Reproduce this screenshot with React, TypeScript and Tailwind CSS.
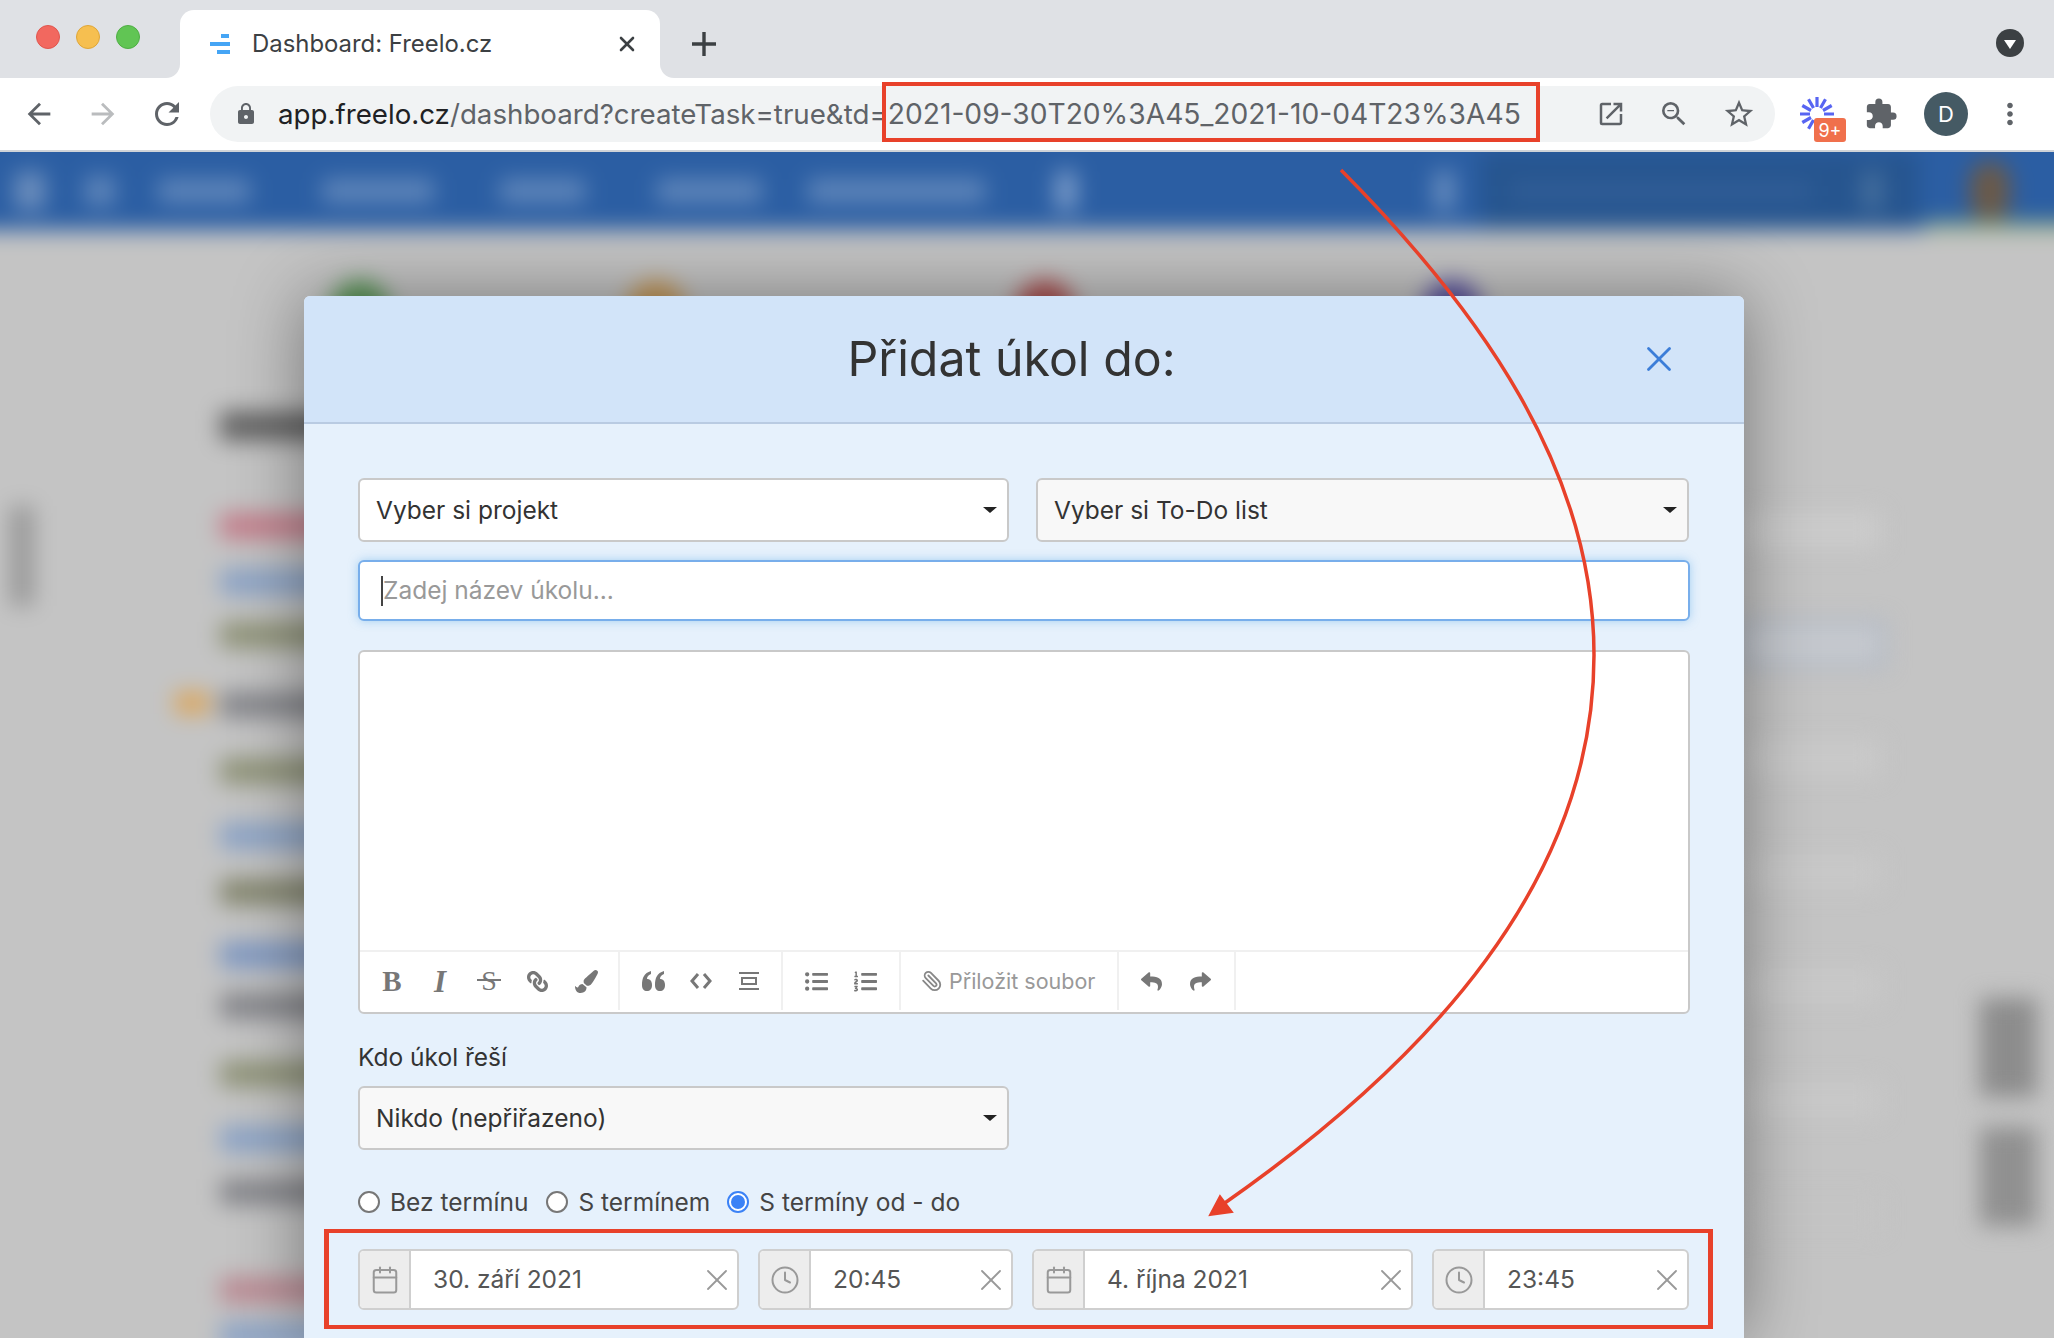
import { Calendar, Clock, Paperclip, X } from "lucide-react";
import {
  FaLink,
  FaListOl,
  FaListUl,
  FaPaintBrush,
  FaReply,
  FaShare,
} from "react-icons/fa";
import {
  MdArrowBack,
  MdArrowForward,
  MdExtension,
  MdLock,
  MdMoreVert,
  MdOutlineOpenInNew,
  MdOutlineStarBorder,
  MdRefresh,
  MdZoomOut,
} from "react-icons/md";

const font = "font-['Inter','Liberation_Sans',sans-serif]";

// blurred task rows behind the modal
const leftRows = [
  "mt-[72px] w-[400px] bg-[#c47f8c]",
  "mt-[30px] w-[400px] bg-[#8ba3c6]",
  "mt-[27px] w-[420px] bg-[#8f9378]",
  "mt-[44px] w-[400px] bg-[#85868b]",
  "mt-[40px] w-[420px] bg-[#8f9378]",
  "mt-[39px] w-[400px] bg-[#8ba3c6]",
  "mt-[30px] w-[420px] bg-[#84866e]",
  "mt-[37px] w-[400px] bg-[#7f98c2]",
  "mt-[25px] w-[400px] bg-[#85868b]",
  "mt-[42px] w-[420px] bg-[#8f9378]",
  "mt-[39px] w-[400px] bg-[#8ba3c6]",
  "mt-[27px] w-[400px] bg-[#85868b]",
  "mt-[72px] w-[400px] bg-[#bb8b94]",
  "mt-[19px] w-[400px] bg-[#8ba3c6]",
];

function BlurredPage() {
  return (
    <div className="mx-[-40px] mt-[-40px] flex h-[1300px] w-[2134px] flex-col blur-[11px]">
      <div className="flex h-[118px] shrink-0 items-center bg-[#2b5ea3] pl-[40px] pt-[40px]">
        <div className="ml-[15px] h-[38px] w-[30px] rounded bg-[#6d8fbd]" />
        <div className="ml-[40px] h-[30px] w-[30px] rounded bg-[#5f86ba]" />
        <div className="ml-[43px] h-[24px] w-[92px] rounded bg-[#5f86ba]" />
        <div className="ml-[72px] h-[24px] w-[112px] rounded bg-[#5f86ba]" />
        <div className="ml-[66px] h-[24px] w-[85px] rounded bg-[#5f86ba]" />
        <div className="ml-[72px] h-[24px] w-[105px] rounded bg-[#5f86ba]" />
        <div className="ml-[46px] h-[24px] w-[177px] rounded bg-[#5f86ba]" />
        <div className="ml-[71px] h-[40px] w-[20px] rounded bg-[#7f9fcb]" />
        <div className="ml-[358px] h-[40px] w-[20px] rounded bg-[#6a8fc0]" />
        <div className="ml-[27px] flex h-[78px] w-[437px] shrink-0 items-center bg-[#26558f] pl-[30px]">
          <div className="h-[16px] w-[300px] bg-[#335f98]" />
          <div className="ml-[51px] h-[40px] w-[20px] rounded bg-[#46709f]" />
        </div>
        <div className="ml-[52px] h-[60px] w-[40px] shrink-0 rounded-full bg-[#6b5a48]" />
      </div>
      <div className="ml-[1965px] mt-[-8px] h-[8px] w-[170px] shrink-0 bg-[#8fae7c]" />
      <div className="flex grow bg-[#c4c4c4]">
        <div className="ml-[50px] mt-[276px] h-[100px] w-[24px] bg-[#999]" />
        <div className="ml-[186px] flex w-[1400px] flex-col">
          <div className="ml-[110px] mt-[50px] flex items-start">
            <div className="size-[60px] rounded-full bg-[#5f9a5c]" />
            <div className="ml-[236px] size-[60px] rounded-full bg-[#c59a5c]" />
            <div className="ml-[329px] size-[60px] rounded-full bg-[#ad5252]" />
            <div className="ml-[347px] size-[60px] rounded-full bg-[#5f57a3]" />
          </div>
          <div className="mt-[71px] h-[30px] w-[400px] bg-[#666]" />
          <div className="flex flex-col">
            {leftRows.map((cls, i) => (
              <div key={i} className={`relative h-[26px] ${cls}`}>
                {i === 3 && <div className="absolute left-[-45px] top-0 h-[22px] w-[34px] bg-[#dba65c]" />}
              </div>
            ))}
          </div>
        </div>
      </div>
    </div>
  );
}

function BlurredRight() {
  const rows = [
    "mt-[0px] bg-[#cbcbcb]",
    "mt-[78px] bg-[#c6c9ce] outline-[6px] outline-[#aab4c4]",
    "mt-[78px] bg-[#c9c9c9]",
    "mt-[78px] bg-[#c8c8c8]",
    "mt-[78px] bg-[#c8c8c8]",
    "mt-[78px] bg-[#c8c8c8]",
    "mt-[78px] bg-[#c4c4c4]",
  ];
  return (
    <div className="flex items-start blur-[11px]">
      <div className="flex w-[136px] flex-col">
        {rows.map((cls, i) => (
          <div key={i} className={`h-[36px] w-[136px] ${cls}`} />
        ))}
      </div>
      <div className="ml-[100px] mt-[486px] flex flex-col gap-[30px]">
        <div className="h-[99px] w-[57px] bg-[#8c8c8c]" />
        <div className="h-[99px] w-[57px] bg-[#909090]" />
      </div>
    </div>
  );
}

function BrowserTop() {
  return (
    <>
      <div className={`flex h-[78px] shrink-0 items-end bg-[#dfe1e5] ${font}`}>
        <div className="mb-[29px] ml-[36px] flex gap-[16px]">
          <span className="size-[24px] rounded-full border border-[#e0564e] bg-[#f2685f]" />
          <span className="size-[24px] rounded-full border border-[#dfa638] bg-[#f6bf50]" />
          <span className="size-[24px] rounded-full border border-[#4fae44] bg-[#61c554]" />
        </div>
        <div className="relative ml-[40px] flex h-[68px] w-[480px] items-center rounded-t-[14px] bg-white pl-[30px] pr-[21px]">
          <span className="absolute bottom-0 left-[-14px] size-[14px] bg-white">
            <span className="block size-[14px] rounded-br-[14px] bg-[#dfe1e5]" />
          </span>
          <span className="absolute bottom-0 right-[-14px] size-[14px] bg-white">
            <span className="block size-[14px] rounded-bl-[14px] bg-[#dfe1e5]" />
          </span>
          <svg width="22" height="20" viewBox="0 0 22 20" className="shrink-0">
            <rect x="11" y="0" width="8" height="4" fill="#45a5f5" />
            <rect x="0" y="8" width="20" height="4" fill="#45a5f5" />
            <rect x="7" y="16" width="13" height="4" fill="#45a5f5" />
          </svg>
          <span className="ml-[20px] grow text-[23.9px] text-[#3c4043]">
            Dashboard: Freelo.cz
          </span>
          <X size={24} strokeWidth={2.6} className="text-[#3c4043]" />
        </div>
        <svg width="26" height="26" viewBox="0 0 26 26" className="mb-[21px] ml-[31px]">
          <path d="M13 1v24M1 13h24" stroke="#3c4043" strokeWidth="3.4" />
        </svg>
        <div className="mb-[21px] ml-auto mr-[30px] flex size-[28px] items-center justify-center rounded-full bg-[#3c4043]">
          <span className="mt-[3px] border-x-[6px] border-t-[9px] border-x-transparent border-t-white" />
        </div>
      </div>

      <div className={`flex h-[74px] shrink-0 items-center border-b-2 border-[#cfd3d8] bg-white pl-[22px] ${font}`}>
        <MdArrowBack size={34} className="text-[#5f6368]" />
        <MdArrowForward size={34} className="ml-[30px] text-[#babcbe]" />
        <MdRefresh size={36} className="ml-[29px] text-[#5f6368]" />
        <div className="ml-[25px] mt-[8px] flex h-[56px] w-[1565px] items-end self-start rounded-full bg-[#f1f3f4]">
          <div className="flex h-[56px] items-center pl-[24px]">
            <MdLock size={24} className="text-[#5f6368]" />
            <span className="ml-[20px] mt-[2px] whitespace-nowrap text-[27.7px] text-[#202124]">
              app.freelo.cz<span className="text-[#5f6368]">/dashboard?createTask=true&amp;td=</span>
            </span>
          </div>
          <span className="ml-[-6px] flex h-[60px] items-center whitespace-nowrap border-4 border-[#e8412a] pl-[2px] pr-[15px] pt-[4px] text-[28.2px] text-[#5f6368]">
            2021-09-30T20%3A45_2021-10-04T23%3A45
          </span>
          <div className="flex h-[56px] items-center">
            <MdOutlineOpenInNew size={30} className="ml-[56px] text-[#5f6368]" />
            <MdZoomOut size={32} className="ml-[32px] text-[#5f6368]" />
            <MdOutlineStarBorder size={34} className="ml-[32px] text-[#5f6368]" />
          </div>
        </div>
        <div className="relative ml-[24px] size-[36px] shrink-0">
          <svg width="36" height="36" viewBox="0 0 36 36" stroke="#5865f2" strokeWidth="3.2">
            <path d="M18 11V1M21.5 12l5-8.7M24 14.500l8.700-5M25 18h10M14.500 12l-5-8.700M12 14.500l-8.700-5M11 18H1M12 21.500l-8.700 5M14.500 24l-5 8.700" />
          </svg>
          <span className="absolute left-[15px] top-[22px] flex h-[24px] w-[32px] items-center justify-center rounded-[3px] bg-[#f0704c] text-[18px] text-white">
            9+
          </span>
        </div>
        <MdExtension size={34} className="ml-[29px] text-[#5f6368]" />
        <span className="ml-[26px] flex size-[44px] items-center justify-center rounded-full bg-[#455a64] text-[22px] text-white">
          D
        </span>
        <MdMoreVert size={34} className="ml-[25px] text-[#5f6368]" />
      </div>
    </>
  );
}

function Select({ label, className }: { label: string; className: string }) {
  return (
    <div className={`flex h-[64px] items-center justify-between rounded-[6px] border-2 border-[#c9c9c9] pl-[16px] pr-[10px] text-[24.5px] text-[#333] ${className}`}>
      <span>{label}</span>
      <span className="border-x-[7px] border-t-[6px] border-x-transparent border-t-[#222]" />
    </div>
  );
}

function DateField({ icon, value, className }: { icon: "date" | "time"; value: string; className: string }) {
  const Icon = icon === "date" ? Calendar : Clock;
  return (
    <div className={`flex h-[61px] items-center overflow-hidden rounded-[6px] border-2 border-[#cfcfcf] bg-white ${className}`}>
      <div className="flex h-full w-[51px] shrink-0 items-center justify-center border-r-2 border-[#cfcfcf] bg-[#ededed]">
        <Icon size={30} strokeWidth={1.6} className="text-[#999]" />
      </div>
      <span className="ml-[22px] grow text-[24.5px] text-[#555]">{value}</span>
      <X size={36} strokeWidth={1.2} className="mr-[2px] text-[#999]" />
    </div>
  );
}

function Radio({ label, checked, className }: { label: string; checked?: boolean; className?: string }) {
  return (
    <div className={`flex items-center ${className ?? ""}`}>
      {checked ? (
        <span className="flex size-[22px] items-center justify-center rounded-full border-2 border-[#3b82f6] bg-white">
          <span className="size-[14px] rounded-full bg-[#3b82f6]" />
        </span>
      ) : (
        <span className="size-[22px] rounded-full border-2 border-[#777] bg-white" />
      )}
      <span className="ml-[10px]">{label}</span>
    </div>
  );
}

function Divider() {
  return <span className="h-full w-[2px] shrink-0 bg-[#f0f0f0]" />;
}

function EditorToolbar() {
  const ic = "shrink-0 text-[#777]";
  return (
    <div className="flex h-[62px] items-center border-t-2 border-[#f0f0f0] pb-[2px] text-[#777]">
      <span className="ml-[20px] w-[24px] text-center font-['Liberation_Serif',serif] text-[29px] font-bold leading-none">B</span>
      <span className="ml-[24px] w-[24px] text-center font-['Liberation_Serif',serif] text-[31px] font-bold italic leading-none">I</span>
      <span className="relative ml-[25px] w-[24px] text-center font-['Liberation_Serif',serif] text-[28px] leading-none">
        S
        <span className="absolute left-0 top-[12px] h-[2px] w-[24px] bg-[#777]" />
      </span>
      <FaLink size={21} className={`ml-[26px] -scale-x-100 ${ic}`} />
      <FaPaintBrush size={23} className={`ml-[27px] ${ic}`} />
      <span className="w-[20px]" />
      <Divider />
      <svg width="23" height="20" viewBox="0 0 23 20" fill="#777" className="ml-[22px] shrink-0">
        <path d="M0 14C0 7 2 2 9 0v3C6 4 5 6 5 8c3 0 5 2 5 6s-2 6-5 6-5-2-5-6ZM13 14c0-7 2-12 9-14v3c-3 1-4 3-4 5 3 0 5 2 5 6s-2 6-5 6-5-2-5-6Z" />
      </svg>
      <svg width="22" height="18" viewBox="0 0 22 18" fill="none" stroke="#777" strokeWidth="3" className="ml-[25px] shrink-0">
        <path d="M8 2 2 9l6 7M14 2l6 7-6 7" />
      </svg>
      <svg width="20" height="18" viewBox="0 0 20 18" fill="none" stroke="#777" strokeWidth="2" className="ml-[27px] shrink-0">
        <path d="M0 1h20M0 17h20M3 6h14v6H3z" />
      </svg>
      <span className="w-[22px]" />
      <Divider />
      <FaListUl size={23} className={`ml-[22px] ${ic}`} />
      <FaListOl size={23} className={`ml-[26px] ${ic}`} />
      <span className="w-[22px]" />
      <Divider />
      <Paperclip size={22} strokeWidth={2} className="ml-[20px] shrink-0 -scale-x-100 text-[#888]" />
      <span className="ml-[6px] whitespace-nowrap text-[21.5px] text-[#999]">Přiložit soubor</span>
      <span className="w-[22px]" />
      <Divider />
      <FaReply size={21} className={`ml-[22px] ${ic}`} />
      <FaShare size={21} className={`ml-[28px] ${ic}`} />
      <span className="w-[23px]" />
      <Divider />
    </div>
  );
}

function Modal() {
  return (
    <div className={`absolute left-[304px] top-[144px] h-[1042px] w-[1440px] overflow-hidden rounded-t-[6px] bg-[#e6f1fc] shadow-[0_0_70px_rgba(0,0,0,0.4)] ${font}`}>
      <div className="flex h-[128px] items-center border-b-2 border-[#b9cbe2] bg-[#d2e4f9] pl-[81px] pr-[70px]">
        <h2 className="grow text-center text-[48.3px] leading-none text-[#333]">Přidat úkol do:</h2>
        <X size={42} strokeWidth={1.6} className="mr-[-6px] text-[#3b7dd8]" />
      </div>
      <div className="px-[54px] pt-[54px]">
        <div className="flex gap-[27px]">
          <Select label="Vyber si projekt" className="w-[651px] bg-white" />
          <Select label="Vyber si To-Do list" className="w-[653px] bg-[#f8f8f8]" />
        </div>
        <div className="mt-[18px] flex h-[61px] items-center rounded-[6px] border-2 border-[#78aeeb] bg-white pl-[21px] text-[24.5px] text-[#999] shadow-[0_0_10px_rgba(102,175,233,0.5)]">
          <span className="h-[30px] w-[2px] bg-[#444]" />
          Zadej název úkolu...
        </div>
        <div className="mt-[29px] flex h-[364px] flex-col justify-end rounded-[6px] border-2 border-[#c9c9c9] bg-white">
          <EditorToolbar />
        </div>
        <div className="mt-[28px] text-[24.5px] leading-[30px] text-[#333]">Kdo úkol řeší</div>
        <Select label="Nikdo (nepřiřazeno)" className="mt-[14px] w-[651px] bg-[#f8f8f8]" />
        <div className="mt-[37px] flex h-[30px] items-center text-[24.5px] text-[#444]">
          <Radio label="Bez termínu" />
          <Radio label="S termínem" className="ml-[18px]" />
          <Radio label="S termíny od - do" checked className="ml-[17px]" />
        </div>
        <div className="ml-[-34px] mr-[-23px] mt-[12px] flex gap-[19px] border-x-[5px] border-y-4 border-[#e8412a] pb-[15px] pl-[29px] pt-[16px]">
          <DateField icon="date" value="30. září 2021" className="w-[381px]" />
          <DateField icon="time" value="20:45" className="w-[255px]" />
          <DateField icon="date" value="4. října 2021" className="w-[381px]" />
          <DateField icon="time" value="23:45" className="w-[257px]" />
        </div>
      </div>
    </div>
  );
}

export default function App() {
  return (
    <div className="flex h-[1338px] w-[2054px] flex-col overflow-hidden bg-white">
      <BrowserTop />
      <div className="relative grow overflow-hidden bg-[#c4c4c4]">
        <BlurredPage />
        <div className="absolute left-[1744px] top-[360px]">
          <BlurredRight />
        </div>
        <Modal />
        {/* curved callout arrow from the URL part to the date fields */}
        <svg width="2054" height="1186" viewBox="0 152 2054 1186" fill="none" className="pointer-events-none absolute left-0 top-0">
          <path d="M1341 170C1480 310 1594 470 1594 655C1594 880 1430 1060 1222 1205" stroke="#e8412a" strokeWidth="3.5" />
          <path d="M1210 1215 1220 1196 1232 1212Z" fill="#e8412a" stroke="#e8412a" strokeWidth="2" />
        </svg>
      </div>
    </div>
  );
}
